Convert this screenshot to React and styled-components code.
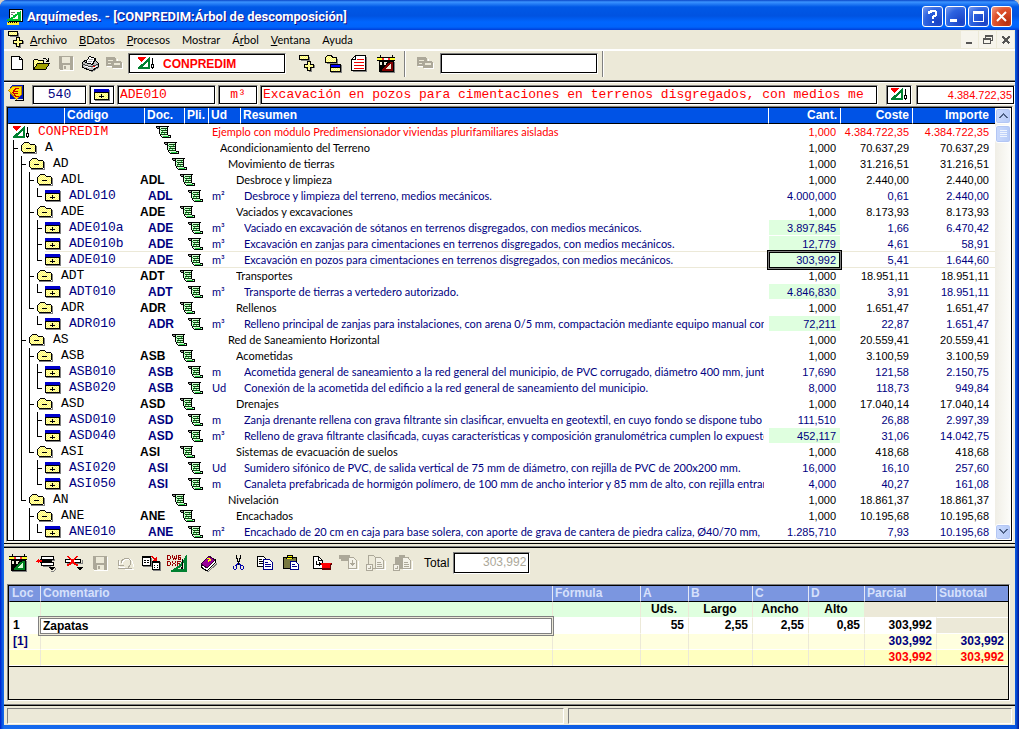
import React from "react";
import styled, { createGlobalStyle, css } from "styled-components";

const GlobalStyle = createGlobalStyle`
* {
box-sizing: border-box;
}
body {
margin: 0;
background: #d8cfc4;
font-family: "Liberation Sans", Arial, sans-serif;
font-size: 11px;
}
button, input {
font: inherit;
color: inherit;
margin: 0;
padding: 0;
border: none;
background: none;
border-radius: 0;
min-width: 0;
}
svg {
display: block;
flex: none;
}
`

const bevel = css`
border: 1px solid;
border-color: #808080 #fff #fff #808080;
box-shadow: inset 0 0 0 1px #000;
background: #fff;
`

const Window = styled.div`
min-height: 100vh;
display: flex;
flex-direction: column;
padding: 0 4px 4px;
background: linear-gradient(90deg, #0019cf 0, #0855dd 2px, #166aee 4px, #0855dd calc(100% - 3px), #001590 100%);
border-radius: 7px 7px 0 0;
overflow: hidden;
`
const TitleBar = styled.header`
height: 30px;
margin: 0 -4px;
padding: 3px 7px 0;
display: flex;
align-items: center;
gap: 4px;
background: linear-gradient(#0a46c8 0, #3a93ff 2px, #0058e6 7px, #0053e1 16px, #0066ff 22px, #0063fb 27px, #003dd7 30px);
`
const Title = styled.h1`
flex: 1;
margin: 0;
color: #fff;
font: bold 13px/16px Roboto, sans-serif;
text-shadow: 1px 1px #0f1089;
white-space: nowrap;
`
const TitleButtons = styled.div`
display: flex;
gap: 2px;
`
const TitleButton = styled.button`
width: 21px;
height: 21px;
border: 1px solid #fff;
border-radius: 3px;
display: flex;
align-items: center;
justify-content: center;
color: #fff;
background: ${p => p.$close
  ? "radial-gradient(circle at 80% 80%, #b83010, #e0512c 60%, #f0a08c)"
  : "radial-gradient(circle at 80% 80%, #1941c5, #2d63e0 60%, #7b9df0)"};
`
const MenuBar = styled.nav`
height: 19px;
padding: 0 1px 0 4px;
display: flex;
align-items: center;
background: #ece9d8;
`
const MenuButton = styled.button`
height: 18px;
padding: 0 6px;
font: 11px/18px Lato, sans-serif;
`
const Spacer = styled.div`
flex: 1;
`
const MdiButton = styled.button`
width: 17px;
height: 17px;
margin-left: 1px;
display: flex;
align-items: center;
justify-content: center;
background: #f6f4ec;
`
const Body = styled.main`
flex: 1;
display: flex;
flex-direction: column;
background: #ece9d8;
`
const Toolbar = styled.div`
height: 33px;
padding: 0 4px 5px 0;
display: flex;
align-items: center;
border-top: 2px solid #fff;
border-bottom: 1px solid #000;
box-shadow: inset 0 -1px #808080;
`
const Tool = styled.button`
width: ${p => (p.$wide ? 28 : p.$narrow ? 24 : 26)}px;
height: 24px;
margin-left: ${p => p.$gap || 0}px;
display: flex;
align-items: center;
justify-content: center;
flex: none;
`
const Separator = styled.div`
width: 2px;
height: 26px;
margin: 0 0 0 4px;
border-left: 1px solid #808080;
border-right: 1px solid #fff;
`
const ToolField = styled.label`
${bevel}
width: 158px;
height: 21px;
margin-left: 2px;
padding: 0 9px;
display: flex;
align-items: center;
gap: 8px;
color: #f00;
font-weight: bold;
font-size: 12px;
`
const FieldInput = styled.input`
width: 100%;
height: 16px;
outline: none;
`
const Form = styled.form`
height: 24px;
padding: 2px 0 2px 4px;
display: flex;
align-items: center;
gap: 2px;
border-top: 1px solid #fff;
`
const FormInput = styled.input`
${bevel}
flex: ${p => (p.$w ? "none" : 1)};
width: ${p => p.$w || 100}px;
height: 20px;
padding: 0 2px;
font: 13px/16px "Liberation Mono", monospace;
color: ${p => p.$color || "#f00"};
text-align: ${p => p.$align || "left"};
outline: none;
`
const Amount = styled(FormInput)`
font: 11px/16px "Liberation Sans", sans-serif;
margin-left: 2px;
padding-right: 2px;
`
const FormButton = styled.button`
${bevel}
width: 26px;
height: 20px;
margin-left: ${p => p.$gap || 0}px;
display: flex;
align-items: center;
justify-content: center;
flex: none;
`
const FormIcon = styled.div`
width: 22px;
height: 20px;
`
const TreePane = styled.section`
margin: 0 2px 0 2px;
display: flex;
border: 1px solid;
border-color: #808080 #fff #fff #808080;
`
const TreeInner = styled.div`
flex: 1;
display: flex;
border: 1px solid #000;
background: #fff;
min-width: 0;
`
const TreeTable = styled.table`
flex: 1;
width: 100%;
display: table;
table-layout: fixed;
border-spacing: 0;
align-self: flex-start;
`
const TreeHead = styled.th`
height: 16px;
padding: 0 ${p => p.$pad || 3}px 0 2px;
border-left: 1px solid ${p => (p.$first ? "#0053e6" : "#fff")};
border-bottom: 1px solid #000;
background: #0053e6;
color: #fff;
font-size: 12px;
line-height: 15px;
text-align: ${p => (p.$right ? "right" : "left")};
white-space: nowrap;
`
const TreeRow = styled.tr`
color: ${p => p.$color};
`
const Cell = styled.td`
height: 16px;
padding: 0;
line-height: 16px;
white-space: nowrap;
${p => p.$current && css`
box-shadow: inset 0 -1px #ece9d8, 0 -1px #ece9d8;
`}
`
const Text = styled(Cell)`
padding-left: ${p => p.$indent}px;
padding-right: 4px;
font-family: Lato, sans-serif;
`
const Clip = styled.div`
height: 16px;
overflow: hidden;
`
const Num = styled(Cell)`
padding-right: ${p => p.$pad}px;
text-align: right;
${p => p.$green && css`
background: #dfffdf;
background-clip: padding-box;
border-left: 1px solid #fff;
box-shadow: inset 0 -1px #fff;
`}
${p => p.$focus && css`
position: relative;
&::after {
content: "";
position: absolute;
inset: 0;
border: 1px solid #000;
box-shadow: 0 0 0 1px #808080, 0 0 0 2px #000;
}
`}
`
const TreeCell = styled.div`
height: 16px;
padding-left: 5px;
display: flex;
`
const Guide = styled.span`
width: 8px;
height: 16px;
display: flex;
flex-direction: column;
flex: none;
&::before {
content: "";
width: ${p => (p.$tick ? 4 : 1)}px;
height: 8px;
border-left: 1px solid ${p => (p.$up ? "#000" : "transparent")};
border-bottom: ${p => (p.$tick ? "1px solid #000" : "none")};
}
&::after {
content: "";
height: 8px;
border-left: 1px solid ${p => (p.$down ? "#000" : "transparent")};
}
`
const Node = styled.span`
flex: 1;
display: flex;
align-items: center;
gap: 8px;
font: 13px/16px "Liberation Mono", monospace;
${p => p.$current && css`
box-shadow: inset 0 -1px #ece9d8, 0 -1px #ece9d8;
`}
`
const Shift = styled.div`
margin-left: ${p => p.$level * 8 - 28}px;
height: 16px;
display: flex;
align-items: center;
font-weight: bold;
font-size: 12px;
`
const ScrollBar = styled.div`
width: 16px;
display: flex;
flex-direction: column;
gap: 1px;
background: linear-gradient(90deg, #f0eee6, #fdfdfa);
`
const ScrollButton = styled.button`
height: ${p => (p.$thumb ? 18 : 16)}px;
border: 1px solid #fff;
border-radius: 3px;
background: linear-gradient(90deg, #cbdafd, #b6cbf7);
box-shadow: inset 0 0 0 1px #b3c6f4;
display: flex;
align-items: center;
justify-content: center;
`
const Divider = styled.div`
height: 5px;
margin-top: 1px;
border-top: 1px solid #000;
border-bottom: 1px solid #000;
box-shadow: inset 0 -1px #808080;
`
const LowerToolbar = styled.div`
height: 36px;
padding: 0 0 6px;
display: flex;
align-items: center;
`
const TotalLabel = styled.label`
margin-left: 8px;
display: flex;
align-items: center;
gap: 4px;
font-size: 12px;
`
const TotalInput = styled.input`
${bevel}
width: 77px;
height: 22px;
padding: 0 3px 2px;
color: #aca899;
text-align: right;
outline: none;
`
const DetailPane = styled.section`
flex: 1;
margin: 0 5px 4px 3px;
border: 1px solid;
border-color: #808080 #fff #fff #808080;
display: flex;
`
const DetailInner = styled.div`
flex: 1;
border: 1px solid #000;
`
const DetailTable = styled.table`
width: 100%;
table-layout: fixed;
border-spacing: 0;
border-bottom: 1px solid #000;
font-size: 12px;
font-weight: bold;
`
const DetailHead = styled.th`
height: 16px;
padding: 0 2px;
background: #7b96e0;
color: #d6e0fb;
border-left: 1px solid ${p => (p.$first ? "#7b96e0" : "#e4e8f6")};
border-bottom: 1px solid #000;
line-height: 15px;
text-align: left;
white-space: nowrap;
`
const DetailCell = styled.td`
height: 16px;
padding: 0 ${p => p.$pad || 4}px 0 3px;
line-height: 15px;
text-align: ${p => p.$align || "right"};
background: ${p => p.$bg};
color: ${p => p.$color || "#000"};
border-left: 1px solid ${p => (p.$first ? "transparent" : "#ece9d8")};
border-bottom: 1px solid #fff;
background-clip: padding-box;
`
const CommentCell = styled(DetailCell)`
padding: 0;
border: none;
`
const CommentInput = styled.input`
display: block;
width: 100%;
height: 16px;
padding: 0 2px;
border: 1px solid #808080;
outline: 1px solid #ece9d8;
box-shadow: 0 0 0 2px #808080;
position: relative;
background: #fff;
`
const StatusBar = styled.footer`
height: 20px;
padding: 2px 3px 1px;
display: flex;
gap: 4px;
border-top: 1px solid #000;
box-shadow: 0 -1px #808080;
`
const StatusPanel = styled.div`
flex: ${p => p.$grow};
border: 1px solid;
border-color: #808080 #fff #fff #808080;
`

const Svg = ({ w, h, children }) => (
  <svg width={w} height={h} viewBox={`0 0 ${w} ${h}`} shapeRendering="crispEdges" fill="none" aria-hidden="true">
    {children}
  </svg>
);

const Dither = () => (
  <svg width="0" height="0" style={{ position: "absolute" }} aria-hidden="true">
    <pattern id="dither" width="2" height="2" patternUnits="userSpaceOnUse">
      <rect width="2" height="2" fill="#ffff60" />
      <path d="M0 0h1v1H0zM1 1h1v1H1z" fill="#fff8c0" />
    </pattern>
  </svg>
);

const Y = "url(#dither)";

const Folder = () => (
  <Svg w={16} h={12}>
    <path d="M2 11h13V4h1v8H2z" fill="#808080" />
    <path d="M1 3h1V2h1V1h5v1h1v1h5v7H1z" fill={Y} />
    <path d="M3 0h5v1H3zM2 1h1v1H2zM8 1h1v1H8zM1 2h1v1H1zM9 2h5v1H9zM0 3h1v6H0zM14 3h1v7h-1zM1 9h1v1H1zM2 10h12v1H2zM5 6h5v1H5z" fill="#000" />
  </Svg>
);

const Concept = () => (
  <Svg w={16} h={12}>
    <path d="M1 1h15v11H1z" fill="#808080" />
    <path d="M0 0h15v11H0z" fill="#000" />
    <path d="M0 0h15v3H0z" fill="#00c" />
    <path d="M1 4h13v6H1z" fill={Y} />
    <path d="M7 5h1v4H7zM5 7h5v1H5z" fill="#000" />
  </Svg>
);

const Scroll = () => (
  <Svg w={16} h={12}>
    <path d="M3 1h8v8H4V4H3zM6 9h8v2H6z" fill="#d4ffd4" />
    <path d="M0 0h13v1H0zM0 1h3v2H1V2H0zM3 1h1v7H3zM11 1h1v8h-1zM4 8h1v2H4zM5 10h1v1H5zM6 11h9v1H6zM14 9h1v3h-1zM12 9h2v1h-2z" fill="#000" />
    <path d="M1 1h2v1H1z" fill="#999" />
    <path d="M5 2h6v1H5zM5 4h6v1H5zM5 6h6v1H5zM5 8h6v1H5z" fill="#141" />
    <path d="M4 3h1v1H4zM6 5h1v1H6zM9 3h1v1H9zM5 7h1v1H5zM8 7h1v1H8zM7 10h6v1H7z" fill="#2c4" />
  </Svg>
);

const Project = () => (
  <Svg w={17} h={13}>
    <path d="M0 0h8v1H7v1H6v1H5v1H4v1H3V4H2V3H1V2H0z" fill="#f00" />
    <path d="M11 0h1v12H0v-2h1V9h1V8h1V7h2V6h1V5h1V4h1V3h1V2h1V1h1zM10 5H9v1H8v1H7v1H6v1H5v1h5z" fill="#008030" fillRule="evenodd" />
    <path d="M14 1h1v6h1v4h-1v1h-1v-1h-1V7h1zM14 8v2h1V8z" fill="#000" fillRule="evenodd" />
  </Svg>
);

const AppLogo = () => (
  <Svg w={16} h={16}>
    <path d="M2 0h14v13H2z" fill="#000" />
    <path d="M3 1h12v11H3z" fill="#fff" />
    <path d="M4 3h4M4 5h2" stroke="#777" />
    <path d="M13 2h1v10H0v-2h2V9h2V8h2V6h2V5h2V3h3z" fill="#0b3" />
    <path d="M11 6v4H6V9h2V8h1V7h1V6z" fill="#fff" />
    <path d="M0 13h12v3H0z" fill="#fe3" />
    <path d="M1 13h1v1H1zM3 13h1v1H3zM5 13h1v1H5zM7 13h1v1H7zM9 13h1v1H9z" fill="#000" />
  </Svg>
);

const TreeDoc = () => (
  <Svg w={16} h={17}>
    <path d="M2 2h9v4H2zM9 7h3v3h4v3h-3v4h-3v-3H7v-3h2z" fill="#808080" />
    <path d="M0.500 0.500h9v4h-9zM8.500 6.500h3v3h3v3h-3v3h-3v-3h-3v-3h3z" fill={Y} stroke="#000" />
  </Svg>
);

const NewPage = () => (
  <Svg w={13} h={15}>
    <path d="M0.500 0.500h8l3 3v10h-11z" fill="#fff" stroke="#000" />
    <path d="M8.500 0.500v3h3" stroke="#000" />
  </Svg>
);

const OpenFolder = () => (
  <Svg w={18} h={14}>
    <path d="M9 2h1V1h3v1h1v1h1V1h1v4h-3V4h1V3h-1V2h-3z" fill="#000" />
    <path d="M0.500 12.500v-9l1-1h3l1 1h5v3" fill={Y} stroke="#000" />
    <path d="M0.500 12.500l4-6h12l-4 6z" fill="#a0a000" stroke="#000" />
  </Svg>
);

const Disk = () => (
  <Svg w={15} h={15}>
    <path d="M1 1h14v14H1z" fill="#fff" />
    <path d="M0 0h14v14H1l-1-1z" fill="#aca899" />
    <path d="M3 1h8v6H3zM4 9h7v5H4z" fill="#ece9d8" />
    <path d="M5 10h2v3H5z" fill="#aca899" />
  </Svg>
);

const Printer = () => (
  <Svg w={18} h={16}>
    <path d="M2 10l8 5 7-4V7l1 1v4l-7 4-9-4z" fill="#808080" />
    <path d="M1 7l4-3h9l3 3v4l-7 4-9-4z" fill="#c0c0c0" stroke="#000" />
    <path d="M4.500 6.500l4-6 6 2-3 6z" fill="#fff" stroke="#000" />
    <path d="M7 5l4 1M8 3l4 1" stroke="#a0a0a0" />
    <path d="M1 8l9 3 7-3" stroke="#404040" />
    <path d="M4 10l6 2M12 12l4-2" stroke="#fff" />
    <path d="M12 10h2v1h-2z" fill="#f00" />
  </Svg>
);

const Linked = () => (
  <Svg w={17} h={13}>
    <path d="M1 9h7v1H1zM7 12h10V6h-1v5H7zM11 2h1v2h-1z" fill="#fff" />
    <path d="M0 0h9v1h1v3h5v1h1v6H6V9H0zM2 3v1h5V3zM2 6v1h3V6zM8 6v2h6V6z" fill="#aca899" fillRule="evenodd" />
  </Svg>
);

const FolderConcept = () => (
  <Svg w={17} h={18}>
    <path d="M2 8h10V4h1v5H2z" fill="#808080" />
    <path d="M0.500 7.500v-5l2-2h4l1 2h4v5z" fill={Y} stroke="#000" />
    <path d="M6 10h11v8H6z" fill="#808080" />
    <path d="M5 9h11v8H5z" fill="#000" />
    <path d="M6 10h9v2H6z" fill="#00f" />
    <path d="M6 13h9v3H6z" fill={Y} />
  </Svg>
);

const Report = () => (
  <Svg w={16} h={17}>
    <path d="M2 16h13V2h1v15H2z" fill="#808080" />
    <path d="M0.500 15.500v-11l4-4h10v15z" fill="#fff" stroke="#000" />
    <path d="M4.500 0.500v4h-4" stroke="#000" />
    <path d="M6 4h7v1H6zM3 7h10v1H3zM3 10h10v1H3zM3 13h10v1H3z" fill="#e00" />
  </Svg>
);

const Measure = ({ color, dark }) => (
  <Svg w={19} h={18}>
    <path d="M3 17h14V7h1v11H3z" fill="#808080" />
    <path d="M3 0h1v2h11V0h1v2h2v1H0V2h3zM0 5h18v1H0zM2 6h15v11H2z" fill="#000" />
    <path d="M0 3h18v2H0z" fill="#ffff30" />
    <path d="M5 3h2v2H5zM11 3h2v2h-2z" fill="#f33" />
    <path d="M7 3h4v2H7z" fill="#fff" />
    <path d="M3 7h2v3H3zM7 7h3v1H9v2H7z" fill="#ece9d8" />
    <path d="M5 16v-2h1v-1h1v-1h1v-1h1v-1h1V9h1V8h2V7h3v9z" fill={color} />
    <path d="M13 9h1v5H9v-1h1v-1h1v-1h1v-1h1z" fill={dark ? "#ece9d8" : "#d4ffd4"} />
  </Svg>
);

const Euro = () => (
  <Svg w={16} h={16}>
    <path d="M4 0h12v14H2V3z" fill="#0018b8" />
    <path d="M15 0h1v16H7v-1h8z" fill="#000" />
    <path d="M0.500 5.500l4-4h9v8l-5 5z" fill="#ffe000" stroke="#c08000" />
    <path d="M7 3h4v1H8v1H7v1h3v1H6v1h4v1H7v1h1v1h3v1H7v-1H6V9H5V8H4V7h1V5h1V4h1z" fill="#c00" />
  </Svg>
);

const InsertRow = () => (
  <Svg w={20} h={17}>
    <path d="M7 4h12v2H7zM7 10h8v2H7zM14 16h4v-1h1v-2h1v1l-2 3h-3z" fill="#808080" />
    <path d="M5.500 1.500h12v3h-12zM5.500 7.500h12v3h-12z" fill="#fff" stroke="#000" />
    <path d="M4 4h1v4H4zM5 5h11v2H5z" fill="#000" />
    <path d="M0 6h1V5h1V4h1v1h3v2H3v1H2V7H0z" fill="#f00" />
    <path d="M13 12h6v1h-1v1h-1v1h-2v-1h-1v-1h-1z" fill="#000" />
  </Svg>
);

const DeleteRow = () => (
  <Svg w={19} h={17}>
    <path d="M2 8h15V5h1v4H2z" fill="#808080" />
    <path d="M0.500 4.500h15v3h-15z" fill="#fff" stroke="#000" />
    <path d="M2 1h2v1h1v1h1v1h3V3h1V2h1V1h2v1h-1v1h-1v1h-1v1H9v2h1v1h1v1h2v2h-2v-1H9V9H8V8H7v1H6v1H4v1H2V9h2V8h1V7h1V5H5V4H4V3H3V2H2z" fill="#f00" />
    <path d="M12 12h6v1h-1v1h-1v1h-2v-1h-1v-1h-1z" fill="#000" />
  </Svg>
);

const Undo = () => (
  <Svg w={17} h={14}>
    <path d="M2 5v6h6M5 8c1-6 11-6 11 0v3M8 13.500h9" stroke="#fff" />
    <path d="M1.500 4v5.500H7M4 7c1-6 10-6 10 0 0 3-3 3-3 5M1 12.500h14" stroke="#aca899" />
  </Svg>
);

const CopyGrid = () => (
  <Svg w={19} h={15}>
    <path d="M1 10h8V2h1v9H1zM11 14h7V6h1v9h-8z" fill="#808080" />
    <path d="M0.500 0.500h8v9h-8zM10.500 5.500h7v8h-7z" fill="#fff" stroke="#000" />
    <path d="M0 0h9v2H0zM10 5h8v2h-8z" fill="#000" />
    <path d="M2 4h2v1H2zM5 4h2v1H5zM2 6h2v1H2zM5 6h2v1H5zM12 9h1v1h-1zM15 9h1v1h-1zM12 11h1v1h-1zM15 11h1v1h-1z" fill="#000" />
    <path d="M9 0h2v1h1v1h2V1h1v4h-4V4h1V3h-1V2h-1V1H9z" fill="#e00" />
  </Svg>
);

const DwgIcon = () => (
  <Svg w={21} h={17}>
    <path d="M20 0v17H4v-2h2v-1h1v-1h2v-1h1v-1h2V9h2V7h1V5h2V3h1V1h1V0z" fill="#008030" />
    <path d="M17 8v6h-6v-1h2v-1h1v-1h2V8z" fill="#ece9d8" />
    <path d="M15 4h1v10h-2v-2h1z" fill="#000" />
    <path d="M0 0h3v1H1v3h2v1H0zM3 1h1v3H3zM5 0h1v3H5zM7 1h1v3H7zM9 0h1v4H9zM6 3h1v2H6zM8 3h1v2H8zM11 0h3v1h-2v3h1V3h-1V2h2v3h-3zM0 6h3v1H1v3h2v1H0zM3 7h1v3H3zM5 6h1v2H5zM8 6h1v2H8zM6 8h2v1H6zM5 9h1v2H5zM8 9h1v2H8zM10 6h4v1h-3v1h2v1h-2v2h-1z" fill="#900" />
  </Svg>
);

const Book = () => (
  <Svg w={17} h={17}>
    <path d="M2 12l6 4 9-9v3l-9 7-6-3z" fill="#808080" />
    <path d="M1 9v3l6 4 8-8V5l-8 8z" fill="#fff" stroke="#000" />
    <path d="M1 9l8-8 6 4-8 8z" fill="#909" stroke="#303" />
    <path d="M7 3h3v1h1v2H9v1H8V5h1V4H7z" fill="#ff0" />
  </Svg>
);

const Scissors = () => (
  <Svg w={11} h={16}>
    <path d="M3 0h1v3h1v3h1V3h1V0h1v4H7v3H6v3H5V7H4V4H3z" fill="#000" />
    <path d="M2 10h1V9h1V8h1v2H4v4H3v1H1v-1H0v-3h2zM1 11v3h2v-3zM6 8h1v1h1v1h2v1h1v3h-1v1H8v-1H7v-4H6zM8 11v3h2v-3z" fill="#00a" fillRule="evenodd" />
  </Svg>
);

const Copy = () => (
  <Svg w={17} h={14}>
    <path d="M0.500 0.500h6l3 3v7h-9z" fill="#fff" stroke="#000" />
    <path d="M2 3h3v1H2zM2 5h5v1H2zM2 7h5v1H2z" fill="#000" />
    <path d="M6.500 3.500h6l3 3v7h-9z" fill="#fff" stroke="#008" />
    <path d="M8 6h3v1H8zM8 8h6v1H8zM8 10h6v1H8z" fill="#008" />
  </Svg>
);

const Paste = () => (
  <Svg w={17} h={16}>
    <path d="M0.500 2.500h13v11h-13z" fill="#787840" stroke="#000" />
    <path d="M4 0h6v4H3V2h1z" fill="#000" />
    <path d="M5 1h4v1H5zM4 3h5v1H4z" fill="#ff0" />
    <path d="M7.500 6.500h5l3 3v5h-8z" fill="#fff" stroke="#008" />
    <path d="M9 9h3v1H9zM9 11h5v1H9z" fill="#008" />
  </Svg>
);

const PageArrow = () => (
  <Svg w={19} h={15}>
    <path d="M0.500 0.500h5l4 4v8h-9z" fill="#fff" stroke="#000" />
    <path d="M5 1h1v3h3v1H5zM3 5h1v3h2V6h1v1h1v2H7v1H6V9H3z" fill="#000" />
    <path d="M8 7h11v2h-1v5H9V9H8z" fill="#600" />
    <path d="M8 7h10v1h-1v4H9V9H8z" fill="#f00" />
  </Svg>
);

const GreyPages = ({ kind }) => (
  <Svg w={20} h={18}>
    {kind === "export" && <path d="M0 1h11v4h1v1H9v1H2V5H0z" fill="#aca899" />}
    {kind === "paste" && <path d="M2 3h4V1h6v2h4v12H2z" fill="#aca899" />}
    {kind === "copy" && <path d="M2.500 1.500h5l3 3v10h-8z" fill="#ece9d8" stroke="#aca899" />}
    <path d="M10 15h9V7h1v9H10z" fill="#fff" />
    <path d="M9.500 3.500h5l3 3v8h-8z" fill="#f4f2e8" stroke="#aca899" />
    {kind === "export"
      ? <path d="M13 6h1v3h2v1h-1v1h-1v1h-1v-1h-1v-1h-1V9h2z" fill="#aca899" />
      : <path d="M11 8h4v1h-4zM11 10h5v1h-5zM11 12h5v1h-5z" fill="#aca899" />}
    {kind !== "export" && <path d="M0.500 10.500h6v6h-6z" fill="#f4f2e8" stroke="#aca899" />}
    {kind !== "export" && <path d="M4 12h1v3H2v-1h2z" fill="#aca899" />}
  </Svg>
);

const Chevron = ({ up }) => (
  <Svg w={9} h={6}>
    <path
      d={up
        ? "M4 0h1v1h1v1h1v1h1v1h1v1H7V4H6V3H5V2H4v1H3v1H2v1H0V4h1V3h1V2h1V1h1z"
        : "M0 0h2v1h1v1h1v1h1V2h1V1h1V0h2v1H8v1H7v1H6v1H5v1H4V4H3V3H2V2H1V1H0z"}
      fill="#4d6185"
    />
  </Svg>
);

const menus = [
  ["", "A", "rchivo"],
  ["", "B", "Datos"],
  ["", "P", "rocesos"],
  ["Mostrar"],
  ["Á", "r", "bol"],
  ["", "V", "entana"],
  ["Ayuda"]
];

// level, code, doc, unit, text, quantity, price, amount, measured
const rows = [
  [0, "CONPREDIM", "", "", "Ejemplo con módulo Predimensionador viviendas plurifamiliares aisladas", "1,000", "4.384.722,35", "4.384.722,35"],
  [1, "A", "", "", "Acondicionamiento del Terreno", "1,000", "70.637,29", "70.637,29"],
  [2, "AD", "", "", "Movimiento de tierras", "1,000", "31.216,51", "31.216,51"],
  [3, "ADL", "ADL", "", "Desbroce y limpieza", "1,000", "2.440,00", "2.440,00"],
  [4, "ADL010", "ADL", "m²", "Desbroce y limpieza del terreno, medios mecánicos.", "4.000,000", "0,61", "2.440,00"],
  [3, "ADE", "ADE", "", "Vaciados y excavaciones", "1,000", "8.173,93", "8.173,93"],
  [4, "ADE010a", "ADE", "m³", "Vaciado en excavación de sótanos en terrenos disgregados, con medios mecánicos.", "3.897,845", "1,66", "6.470,42", true],
  [4, "ADE010b", "ADE", "m³", "Excavación en zanjas para cimentaciones en terrenos disgregados, con medios mecánicos.", "12,779", "4,61", "58,91", true],
  [4, "ADE010", "ADE", "m³", "Excavación en pozos para cimentaciones en terrenos disgregados, con medios mecánicos.", "303,992", "5,41", "1.644,60", true],
  [3, "ADT", "ADT", "", "Transportes", "1,000", "18.951,11", "18.951,11"],
  [4, "ADT010", "ADT", "m³", "Transporte de tierras a vertedero autorizado.", "4.846,830", "3,91", "18.951,11", true],
  [3, "ADR", "ADR", "", "Rellenos", "1,000", "1.651,47", "1.651,47"],
  [4, "ADR010", "ADR", "m³", "Relleno principal de zanjas para instalaciones, con arena 0/5 mm, compactación mediante equipo manual con", "72,211", "22,87", "1.651,47", true],
  [2, "AS", "", "", "Red de Saneamiento Horizontal", "1,000", "20.559,41", "20.559,41"],
  [3, "ASB", "ASB", "", "Acometidas", "1,000", "3.100,59", "3.100,59"],
  [4, "ASB010", "ASB", "m", "Acometida general de saneamiento a la red general del municipio, de PVC corrugado, diámetro 400 mm, junta e", "17,690", "121,58", "2.150,75"],
  [4, "ASB020", "ASB", "Ud", "Conexión de la acometida del edificio a la red general de saneamiento del municipio.", "8,000", "118,73", "949,84"],
  [3, "ASD", "ASD", "", "Drenajes", "1,000", "17.040,14", "17.040,14"],
  [4, "ASD010", "ASD", "m", "Zanja drenante rellena con grava filtrante sin clasificar, envuelta en geotextil, en cuyo fondo se dispone tubo d", "111,510", "26,88", "2.997,39"],
  [4, "ASD040", "ASD", "m³", "Relleno de grava filtrante clasificada, cuyas características y composición granulométrica cumplen lo expuesto", "452,117", "31,06", "14.042,75", true],
  [3, "ASI", "ASI", "", "Sistemas de evacuación de suelos", "1,000", "418,68", "418,68"],
  [4, "ASI020", "ASI", "Ud", "Sumidero sifónico de PVC, de salida vertical de 75 mm de diámetro, con rejilla de PVC de 200x200 mm.", "16,000", "16,10", "257,60"],
  [4, "ASI050", "ASI", "m", "Canaleta prefabricada de hormigón polímero, de 100 mm de ancho interior y 85 mm de alto, con rejilla entramac", "4,000", "40,27", "161,08"],
  [2, "AN", "", "", "Nivelación", "1,000", "18.861,37", "18.861,37"],
  [3, "ANE", "ANE", "", "Encachados", "1,000", "10.195,68", "10.195,68"],
  [4, "ANE010", "ANE", "m²", "Encachado de 20 cm en caja para base solera, con aporte de grava de cantera de piedra caliza, Ø40/70 mm,", "1.285,710", "7,93", "10.195,68"]
];

// levels that go on below the last visible row
const openLevels = [1, 3];

const hasNext = (index, level) => {
  for (let i = index + 1; i < rows.length; i++) {
    if (rows[i][0] === level) return true;
    if (rows[i][0] < level) return false;
  }
  return openLevels.includes(level);
};

const levelColor = level => (level === 0 ? "#f00" : level === 4 ? "#000080" : "#000");

const Row = ({ row, index, current }) => {
  const [level, code, doc, unit, text, qty, price, amount, measured] = row;
  const guides = [];
  for (let d = 1; d <= level; d++) {
    const next = hasNext(index, d);
    guides.push(<Guide key={d} $tick={d === level} $up={next || d === level} $down={next} />);
  }
  return (
    <TreeRow $color={levelColor(level)}>
      <Cell colSpan={2}>
        <TreeCell>
          {guides}
          <Node $current={current}>
            {level === 0 ? <Project /> : level === 4 ? <Concept /> : <Folder />}
            {code}
          </Node>
        </TreeCell>
      </Cell>
      <Cell $current={current}><Shift $level={level}>{doc}</Shift></Cell>
      <Cell $current={current}><Shift $level={level}><Scroll /></Shift></Cell>
      {unit && <Text $indent={4} $current={current}>{unit}</Text>}
      <Text colSpan={unit ? 1 : 2} $indent={unit ? 4 : 4 + level * 8} $current={current}>
        <Clip>{text}</Clip>
      </Text>
      <Num $pad={4} $green={measured} $focus={current}>{qty}</Num>
      <Num $pad={3} $current={current}>{price}</Num>
      <Num $pad={6} $current={current}>{amount}</Num>
    </TreeRow>
  );
};

export default class App extends React.Component {
  state = {
    comment: "Zapatas",
    search: ""
  };

  setComment = e => this.setState({ comment: e.target.value });

  setSearch = e => this.setState({ search: e.target.value });

  render() {
    return (
      <Window>
        <GlobalStyle />
        <Dither />
        <TitleBar>
          <AppLogo />
          <Title>Arquímedes. - [CONPREDIM:Árbol de descomposición]</Title>
          <TitleButtons>
            <TitleButton aria-label="Ayuda">
              <Svg w={11} h={13}><path d="M2 4V2h2V1h4l1 1v3L6 7v2M6 11v2" stroke="#fff" strokeWidth="2" /></Svg>
            </TitleButton>
            <TitleButton aria-label="Minimizar">
              <Svg w={13} h={13}><path d="M1 9h7v3H1z" fill="#fff" /></Svg>
            </TitleButton>
            <TitleButton aria-label="Maximizar">
              <Svg w={13} h={13}><path d="M1 1h11v11H1zM2 4v7h9V4z" fill="#fff" fillRule="evenodd" /></Svg>
            </TitleButton>
            <TitleButton $close aria-label="Cerrar">
              <Svg w={13} h={13}><path d="M2 2l9 9M11 2l-9 9" stroke="#fff" strokeWidth="2" shapeRendering="auto" /></Svg>
            </TitleButton>
          </TitleButtons>
        </TitleBar>
        <MenuBar>
          <TreeDoc />
          {menus.map(([before, key, after]) => (
            <MenuButton key={before + key}>{before}{key && <u>{key}</u>}{after}</MenuButton>
          ))}
          <Spacer />
          <MdiButton aria-label="Minimizar ventana">
            <Svg w={9} h={9}><path d="M1 7h6v2H1z" fill="#555" /></Svg>
          </MdiButton>
          <MdiButton aria-label="Restaurar ventana">
            <Svg w={10} h={9}><path d="M2 0h8v6H8V5h1V2H3v1H2zM0 3h8v6H0zM1 5v3h6V5z" fill="#555" fillRule="evenodd" /></Svg>
          </MdiButton>
          <MdiButton aria-label="Cerrar ventana">
            <Svg w={8} h={8}><path d="M0.500 0.500l7 7M7.500 0.500l-7 7" stroke="#555" strokeWidth="2" /></Svg>
          </MdiButton>
        </MenuBar>
        <Body>
          <Toolbar>
            <Tool aria-label="Nuevo"><NewPage /></Tool>
            <Tool $narrow aria-label="Abrir"><OpenFolder /></Tool>
            <Tool $narrow aria-label="Guardar"><Disk /></Tool>
            <Tool $narrow aria-label="Imprimir"><Printer /></Tool>
            <Tool $narrow aria-label="Obras"><Linked /></Tool>
            <ToolField>
              <Project />
              <FieldInput aria-label="Obra" value="CONPREDIM" readOnly />
            </ToolField>
            <Tool $gap={8} aria-label="Árbol"><TreeDoc /></Tool>
            <Tool aria-label="Capítulos"><FolderConcept /></Tool>
            <Tool aria-label="Listado"><Report /></Tool>
            <Tool $wide aria-label="Medición"><Measure color="#800000" dark /></Tool>
            <Separator />
            <Tool $gap={6} aria-label="Ventanas"><Linked /></Tool>
            <ToolField>
              <FieldInput aria-label="Buscar" value={this.state.search} onChange={this.setSearch} />
            </ToolField>
            <Separator />
          </Toolbar>
          <Form onSubmit={e => e.preventDefault()}>
            <FormIcon><Euro /></FormIcon>
            <FormInput aria-label="Número" $w={55} $align="center" $color="#000080" defaultValue="540" />
            <FormButton type="button" aria-label="Partida"><Concept /></FormButton>
            <FormInput aria-label="Código" $w={99} defaultValue="ADE010" />
            <FormInput aria-label="Unidad" $w={40} $align="center" defaultValue="m³" />
            <FormInput aria-label="Resumen" defaultValue="Excavación en pozos para cimentaciones en terrenos disgregados, con medios me" />
            <FormButton type="button" $gap={6} aria-label="Total de la obra"><Project /></FormButton>
            <Amount aria-label="Importe total" $w={99} $align="right" defaultValue="4.384.722,35" />
          </Form>
          <TreePane>
            <TreeInner>
              <TreeTable>
                <colgroup>
                  <col width="56" />
                  <col width="80" />
                  <col width="40" />
                  <col width="24" />
                  <col width="32" />
                  <col />
                  <col width="72" />
                  <col width="72" />
                  <col width="83" />
                </colgroup>
                <thead>
                  <tr>
                    <TreeHead $first />
                    <TreeHead>Código</TreeHead>
                    <TreeHead>Doc.</TreeHead>
                    <TreeHead>Pli.</TreeHead>
                    <TreeHead>Ud</TreeHead>
                    <TreeHead>Resumen</TreeHead>
                    <TreeHead $right>Cant.</TreeHead>
                    <TreeHead $right>Coste</TreeHead>
                    <TreeHead $right $pad={6}>Importe</TreeHead>
                  </tr>
                </thead>
                <tbody>
                  {rows.map((row, i) => (
                    <Row key={row[1]} row={row} index={i} current={row[1] === "ADE010"} />
                  ))}
                </tbody>
              </TreeTable>
              <ScrollBar>
                <ScrollButton aria-label="Subir"><Chevron up /></ScrollButton>
                <ScrollButton $thumb aria-label="Desplazar">
                  <Svg w={7} h={8}><path d="M0 0h7v1H0zM0 2h7v1H0zM0 4h7v1H0zM0 6h7v1H0z" fill="#eef4fe" /></Svg>
                </ScrollButton>
                <Spacer />
                <ScrollButton aria-label="Bajar"><Chevron /></ScrollButton>
              </ScrollBar>
            </TreeInner>
          </TreePane>
          <Divider />
          <LowerToolbar>
            <Tool $wide aria-label="Medir"><Measure color="#008020" /></Tool>
            <Tool $wide aria-label="Insertar línea"><InsertRow /></Tool>
            <Tool $wide aria-label="Borrar línea"><DeleteRow /></Tool>
            <Tool $narrow aria-label="Guardar medición"><Disk /></Tool>
            <Tool aria-label="Deshacer"><Undo /></Tool>
            <Tool aria-label="Copiar tabla"><CopyGrid /></Tool>
            <Tool aria-label="DWG DXF"><DwgIcon /></Tool>
            <Tool $wide $gap={4} aria-label="Manual"><Book /></Tool>
            <Tool $wide $gap={2} aria-label="Cortar"><Scissors /></Tool>
            <Tool aria-label="Copiar"><Copy /></Tool>
            <Tool aria-label="Pegar"><Paste /></Tool>
            <Tool $wide $gap={4} aria-label="Importar"><PageArrow /></Tool>
            <Tool aria-label="Exportar"><GreyPages kind="export" /></Tool>
            <Tool $wide aria-label="Copiar páginas"><GreyPages kind="copy" /></Tool>
            <Tool aria-label="Pegar páginas"><GreyPages kind="paste" /></Tool>
            <TotalLabel>
              Total
              <TotalInput value="303,992" readOnly />
            </TotalLabel>
          </LowerToolbar>
          <DetailPane>
            <DetailInner>
              <DetailTable>
                <colgroup>
                  <col width="31" />
                  <col />
                  <col width="88" />
                  <col width="48" />
                  <col width="64" />
                  <col width="56" />
                  <col width="56" />
                  <col width="72" />
                  <col width="72" />
                </colgroup>
                <thead>
                  <tr>
                    {["Loc", "Comentario", "Fórmula", "A", "B", "C", "D", "Parcial", "Subtotal"].map((name, i) => (
                      <DetailHead key={name} $first={i === 0}>{name}</DetailHead>
                    ))}
                  </tr>
                </thead>
                <tbody>
                  <tr>
                    <DetailCell $first $bg="#dfffdf" />
                    {["", "", "Uds.", "Largo", "Ancho", "Alto"].map((name, i) => (
                      <DetailCell key={i} $bg="#dfffdf" $align="center">{name}</DetailCell>
                    ))}
                    <DetailCell $bg="#ece9d8" />
                    <DetailCell $bg="#ece9d8" />
                  </tr>
                  <tr>
                    <DetailCell $first $bg="#fff" $align="left">1</DetailCell>
                    <CommentCell $bg="#fff">
                      <CommentInput aria-label="Comentario" value={this.state.comment} onChange={this.setComment} />
                    </CommentCell>
                    <DetailCell $bg="#fff" />
                    <DetailCell $bg="#fff">55</DetailCell>
                    <DetailCell $bg="#fff">2,55</DetailCell>
                    <DetailCell $bg="#fff">2,55</DetailCell>
                    <DetailCell $bg="#fff">0,85</DetailCell>
                    <DetailCell $bg="#fff">303,992</DetailCell>
                    <DetailCell $bg="#ece9d8" />
                  </tr>
                  <tr>
                    <DetailCell $first $bg="#ffffdf" $align="left" $color="#000080">[1]</DetailCell>
                    {["", "", "", "", "", "", "303,992", "303,992"].map((value, i) => (
                      <DetailCell key={i} $bg="#ffffdf" $color="#000080">{value}</DetailCell>
                    ))}
                  </tr>
                  <tr>
                    <DetailCell $first $bg="#ffffc0" />
                    {["", "", "", "", "", "", "303,992", "303,992"].map((value, i) => (
                      <DetailCell key={i} $bg="#ffffc0" $color="#f00">{value}</DetailCell>
                    ))}
                  </tr>
                </tbody>
              </DetailTable>
            </DetailInner>
          </DetailPane>
          <StatusBar>
            <StatusPanel $grow={557} />
            <StatusPanel $grow={443} />
          </StatusBar>
        </Body>
      </Window>
    );
  }
}
